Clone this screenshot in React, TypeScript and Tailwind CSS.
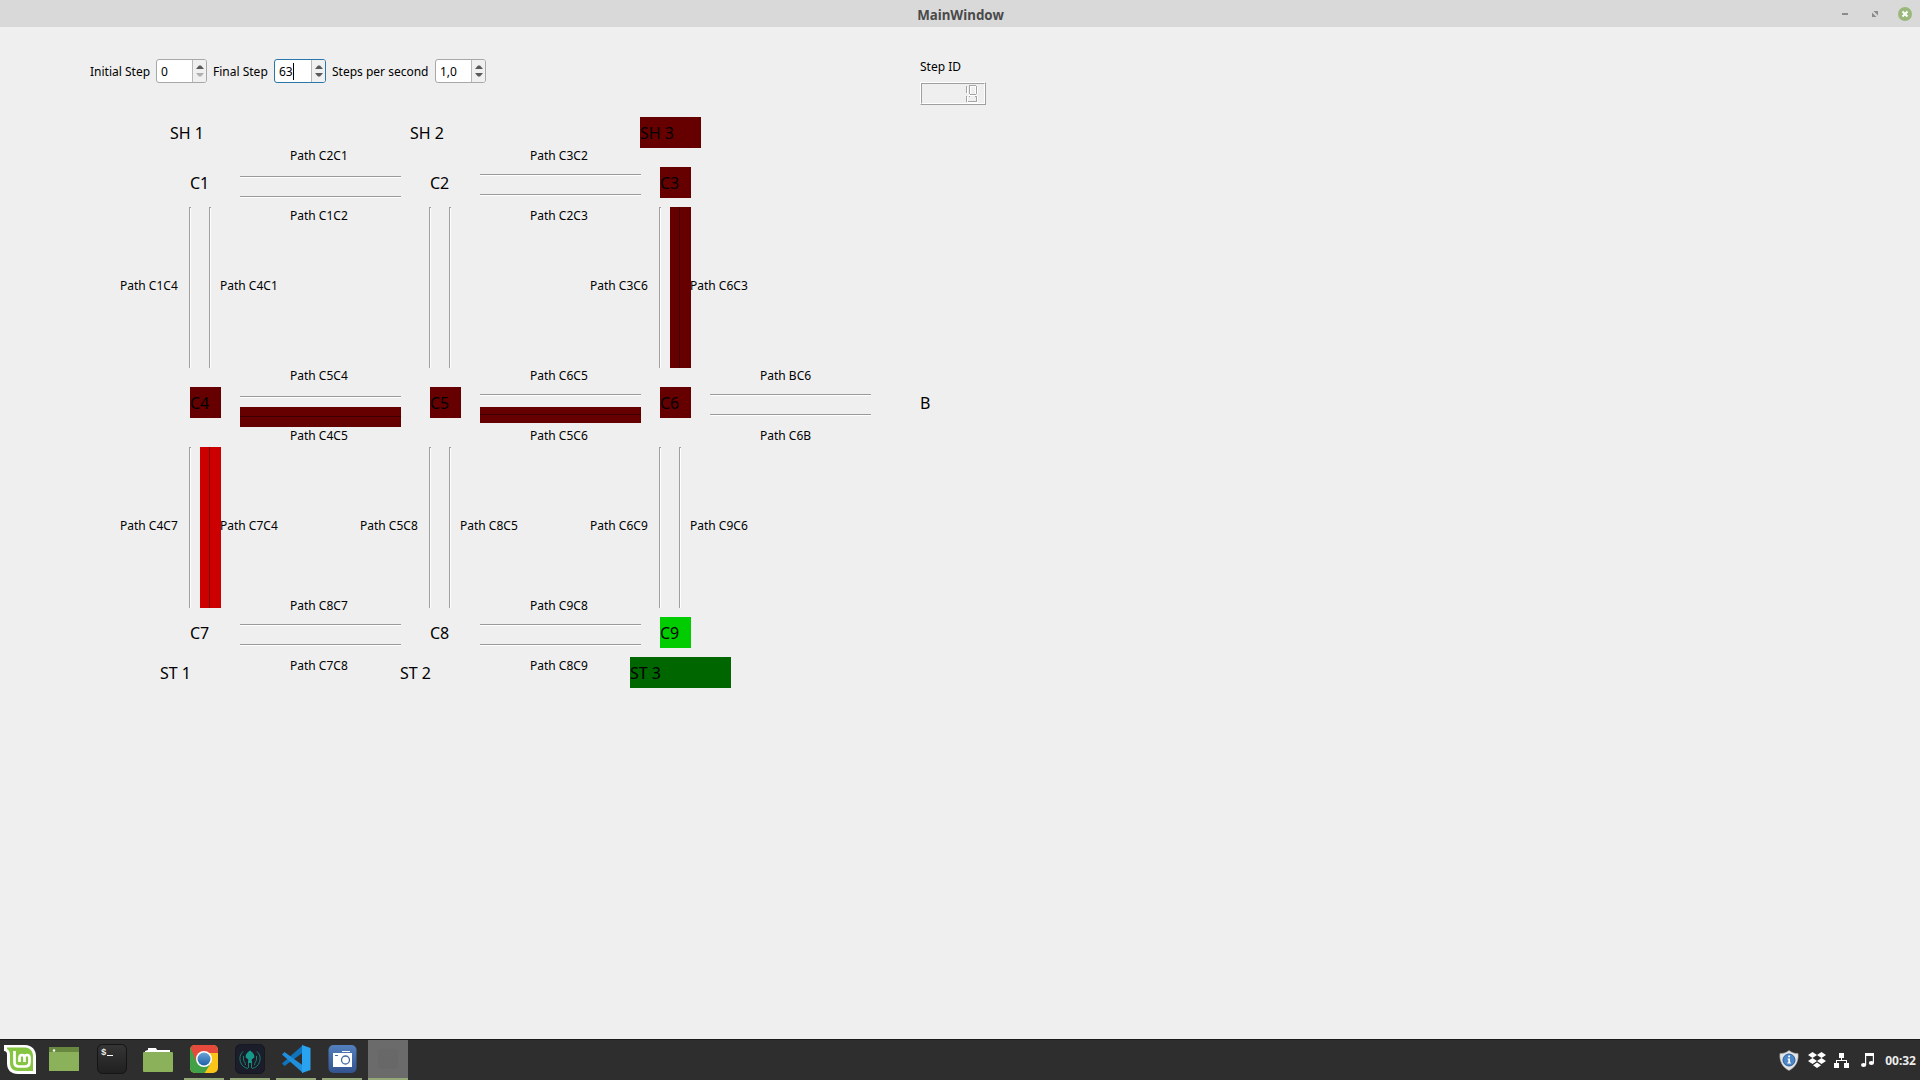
import React from 'react';

type Stop = { name: string; x: number; y: number; w?: number; fill?: string };
type Caption = { text: string; x: number; y: number };
type Lane = { x: number; y: number; vertical?: boolean };
type Load = { x: number; y: number; w: number; h: number; fill: string; line: string; at: number; vertical?: boolean };

const STOPS: Stop[] = [
  { name: 'SH 1', x: 170, y: 117 },
  { name: 'SH 2', x: 410, y: 117 },
  { name: 'SH 3', x: 640, y: 117, w: 61, fill: 'bg-[#660000]' },
  { name: 'C1', x: 190, y: 167 },
  { name: 'C2', x: 430, y: 167 },
  { name: 'C3', x: 660, y: 167, w: 31, fill: 'bg-[#660000]' },
  { name: 'C4', x: 190, y: 387, w: 31, fill: 'bg-[#660000]' },
  { name: 'C5', x: 430, y: 387, w: 31, fill: 'bg-[#660000]' },
  { name: 'C6', x: 660, y: 387, w: 31, fill: 'bg-[#660000]' },
  { name: 'B', x: 920, y: 387 },
  { name: 'C7', x: 190, y: 617 },
  { name: 'C8', x: 430, y: 617 },
  { name: 'C9', x: 660, y: 617, w: 31, fill: 'bg-[#00cc00]' },
  { name: 'ST 1', x: 160, y: 657 },
  { name: 'ST 2', x: 400, y: 657 },
  { name: 'ST 3', x: 630, y: 657, w: 101, fill: 'bg-[#006600]' },
];

const CAPTIONS: Caption[] = [
  { text: 'Path C2C1', x: 290, y: 147 },
  { text: 'Path C3C2', x: 530, y: 147 },
  { text: 'Path C1C2', x: 290, y: 207 },
  { text: 'Path C2C3', x: 530, y: 207 },
  { text: 'Path C1C4', x: 120, y: 277 },
  { text: 'Path C4C1', x: 220, y: 277 },
  { text: 'Path C3C6', x: 590, y: 277 },
  { text: 'Path C6C3', x: 690, y: 277 },
  { text: 'Path C5C4', x: 290, y: 367 },
  { text: 'Path C6C5', x: 530, y: 367 },
  { text: 'Path BC6', x: 760, y: 367 },
  { text: 'Path C4C5', x: 290, y: 427 },
  { text: 'Path C5C6', x: 530, y: 427 },
  { text: 'Path C6B', x: 760, y: 427 },
  { text: 'Path C4C7', x: 120, y: 517 },
  { text: 'Path C7C4', x: 220, y: 517 },
  { text: 'Path C5C8', x: 360, y: 517 },
  { text: 'Path C8C5', x: 460, y: 517 },
  { text: 'Path C6C9', x: 590, y: 517 },
  { text: 'Path C9C6', x: 690, y: 517 },
  { text: 'Path C8C7', x: 290, y: 597 },
  { text: 'Path C9C8', x: 530, y: 597 },
  { text: 'Path C7C8', x: 290, y: 657 },
  { text: 'Path C8C9', x: 530, y: 657 },
];

const LANES: Lane[] = [
  { x: 240, y: 176 },
  { x: 240, y: 196 },
  { x: 480, y: 174 },
  { x: 480, y: 194 },
  { x: 240, y: 396 },
  { x: 480, y: 394 },
  { x: 710, y: 394 },
  { x: 710, y: 414 },
  { x: 240, y: 624 },
  { x: 240, y: 644 },
  { x: 480, y: 624 },
  { x: 480, y: 644 },
  { x: 189, y: 207, vertical: true },
  { x: 209, y: 207, vertical: true },
  { x: 429, y: 207, vertical: true },
  { x: 449, y: 207, vertical: true },
  { x: 659, y: 207, vertical: true },
  { x: 189, y: 447, vertical: true },
  { x: 429, y: 447, vertical: true },
  { x: 449, y: 447, vertical: true },
  { x: 659, y: 447, vertical: true },
  { x: 679, y: 447, vertical: true },
];

const LOADS: Load[] = [
  { x: 240, y: 407, w: 161, h: 20, fill: 'bg-[#660000]', line: 'bg-[#3d0000]', at: 9 },
  { x: 480, y: 407, w: 161, h: 16, fill: 'bg-[#660000]', line: 'bg-[#3d0000]', at: 7 },
  { x: 670, y: 207, w: 21, h: 161, fill: 'bg-[#660000]', line: 'bg-[#3d0000]', at: 9, vertical: true },
  { x: 200, y: 447, w: 21, h: 161, fill: 'bg-[#cc0000]', line: 'bg-[#7a0000]', at: 9, vertical: true },
];

function Diagram() {
  return (
    <div className="pointer-events-none absolute inset-x-0 -top-[27px] h-[720px]">
      {CAPTIONS.map((c) => (
        <span key={c.text} className="absolute text-[12px] leading-[17px] whitespace-nowrap" style={{ left: c.x, top: c.y }}>
          {c.text}
        </span>
      ))}
      {LANES.map((l, i) =>
        l.vertical ? (
          <div key={i} className="absolute h-[161px] w-[2px] border-t border-l border-[#9f9f9f] bg-white" style={{ left: l.x, top: l.y }} />
        ) : (
          <div key={i} className="absolute h-[2px] w-[161px] border-t border-[#9a9a9a] bg-white" style={{ left: l.x, top: l.y }} />
        ),
      )}
      {LOADS.map((b, i) => (
        <div key={i} className={`absolute ${b.fill}`} style={{ left: b.x, top: b.y, width: b.w, height: b.h }}>
          {b.vertical ? (
            <div className={`absolute inset-y-0 w-px ${b.line}`} style={{ left: b.at }} />
          ) : (
            <div className={`absolute inset-x-0 h-px ${b.line}`} style={{ top: b.at }} />
          )}
        </div>
      ))}
      {STOPS.map((s) => (
        <div
          key={s.name}
          className={`absolute h-[31px] text-[16px] leading-[33px] whitespace-nowrap ${s.fill ?? ''}`}
          style={{ left: s.x, top: s.y, width: s.w }}
        >
          {s.name}
        </div>
      ))}
    </div>
  );
}

function SpinBox({ value, width, focused, atMin }: { value: string; width: string; focused?: boolean; atMin?: boolean }) {
  return (
    <div className={`flex h-6 ${width} overflow-hidden rounded-[3px] border bg-white ${focused ? 'border-[#2a76a8]' : 'border-[#a8a8a8]'}`}>
      <div className="flex flex-1 items-center pt-px pl-1 text-[12px]">
        {value}
        {focused && <span className="h-[17px] w-px bg-black" />}
      </div>
      <div className="flex w-[14px] flex-col items-center justify-between border-l border-[#b8b8b8] bg-[#f0f0f0] py-[5px]">
        <svg width="8" height="4" viewBox="0 0 8 4"><path d="M0 4L3 0.5h2L8 4z" fill="#5a5a5a" /></svg>
        <svg width="8" height="4" viewBox="0 0 8 4"><path d="M0 0L3 3.5h2L8 0z" fill={atMin ? '#b0b0b0' : '#5a5a5a'} /></svg>
      </div>
    </div>
  );
}

function Controls() {
  return (
    <div className="flex h-6 items-center text-[12px]">
      <span className="w-[66px] pt-px whitespace-nowrap">Initial Step</span>
      <SpinBox value="0" width="w-[51px]" atMin />
      <span className="ml-[6px] w-[61px] pt-px whitespace-nowrap">Final Step</span>
      <SpinBox value="63" width="w-[52px]" focused />
      <span className="ml-[6px] w-[103px] pt-px whitespace-nowrap">Steps per second</span>
      <SpinBox value="1,0" width="w-[51px]" />
    </div>
  );
}

function StepDisplay() {
  return (
    <div className="flex flex-col">
      <span className="text-[12px] leading-[17px]">Step ID</span>
      <div className="mt-[7px] h-[23px] w-[66px] border border-t-white border-r-[#9f9f9f] border-b-[#9f9f9f] border-l-white">
        <div className="flex h-full justify-end border border-t-[#9f9f9f] border-r-white border-b-white border-l-[#9f9f9f] pr-[6px]">
          <svg width="12" height="19" viewBox="0 0 12 19" fill="none" shapeRendering="crispEdges">
            <path d="M1.500 3v7M1.500 13v5M11.500 3v7M11.500 12v7M4.500 3v7M9.500 3v7M3 2.500h7M2 11.500h9M2 18.500h9" stroke="#fff" />
            <path d="M0.500 2v7M0.500 12v6M3.500 2v8M10.500 2v8M10.500 12v6M3 1.500h7M4 10.500h6M3 12.500h1M9 12.500h1M2 17.500h8" stroke="#a4a4a4" />
          </svg>
        </div>
      </div>
    </div>
  );
}

function TitleBar() {
  return (
    <header className="grid h-[27px] grid-cols-3 items-center bg-[#d9d9d9]">
      <span />
      <h1 className="pt-[2px] pl-px text-center text-[13.33px] leading-[20px] font-bold text-[#4a4a4a]">MainWindow</h1>
      <div className="flex items-center justify-end pr-2">
        <svg width="6" height="14" viewBox="0 0 6 14" className="mr-6"><path d="M0 6h6v2H0z" fill="#8b8b8b" /></svg>
        <svg width="6" height="6" viewBox="0 0 6 6" className="mr-5" fill="#8b8b8b"><path d="M1.500 0H6v4.500zM0 1.500V6h4.500z" /></svg>
        <svg width="14" height="14" viewBox="0 0 14 14">
          <circle cx="7" cy="7" r="7" fill="#9ab87c" />
          <path d="M4.500 4.500l5 5m0-5l-5 5" stroke="#fff" strokeWidth="2" />
        </svg>
      </div>
    </header>
  );
}

function MintIcon() {
  return (
    <svg width="32" height="30" viewBox="0 0 32 30">
      <path d="M0 1h21c7 0 11 5 11 11v18H14C7 30 3 26 3 19v-8C3 8 2 7 0 7z" fill="#fff" />
      <path d="M3 3.500h18c5 0 8 4 8 8.500v15H14c-5 0-8-3-8-8V11C6 8 5 6 3 5z" fill="#86c541" />
      <path d="M10.500 7v11c0 3 1.500 4.500 4.500 4.500h6c3 0 4.500-1.500 4.500-4.500v-4c0-4-5-4-5 0v4m0-4c0-4-5-4-5 0v4" fill="none" stroke="#fff" strokeWidth="2.700" />
    </svg>
  );
}

function WindowIcon() {
  return (
    <svg width="30" height="24" viewBox="0 0 30 24">
      <path d="M0 1q0-1 1-1h28q1 0 1 1v23H0z" fill="#8bb15b" />
      <path d="M0 1q0-1 1-1h28q1 0 1 1v4H0z" fill="#68883f" />
      <circle cx="5" cy="3.500" r="1.200" fill="#fff" />
    </svg>
  );
}

function TerminalIcon() {
  return (
    <svg width="30" height="30" viewBox="0 0 30 30">
      <defs>
        <linearGradient id="term" x2="0" y2="1"><stop stopColor="#353535" /><stop offset="1" stopColor="#202020" /></linearGradient>
      </defs>
      <rect x=".5" y=".5" width="29" height="29" rx="5" fill="url(#term)" stroke="#141414" />
      <text x="4" y="10.500" fill="#e8e8e8" fontSize="9" fontWeight="bold" fontFamily="Liberation Mono, monospace">$</text>
      <path d="M10 11.500h6" stroke="#fff" />
    </svg>
  );
}

function FolderIcon() {
  return (
    <svg width="30" height="25" viewBox="0 0 30 25">
      <path d="M2 6V4l3-1V1h8l1 2h13v3z" fill="#fff" />
      <path d="M0 6q0-1 1-1h28q1 0 1 1v18q0 1-1 1H1q-1 0-1-1z" fill="#8bb15b" />
    </svg>
  );
}

function ChromeIcon() {
  return (
    <svg width="30" height="30" viewBox="0 0 30 30">
      <defs>
        <clipPath id="chromeClip"><rect x="1" y="1" width="28" height="28" rx="5" /></clipPath>
        <linearGradient id="chromeBlue" x2="0" y2="1"><stop stopColor="#6aa5d8" /><stop offset="1" stopColor="#1e5fa8" /></linearGradient>
      </defs>
      <g clipPath="url(#chromeClip)">
        <path d="M0 0h30v30H0z" fill="#fac518" />
        <path d="M0 0v30h15l7-11-7-4z" fill="#42a047" />
        <path d="M0 0h30v9H15v6l-7 4z" fill="#e54a3c" />
      </g>
      <circle cx="15" cy="15" r="8" fill="#fff" />
      <circle cx="15" cy="15" r="6.500" fill="url(#chromeBlue)" />
    </svg>
  );
}

function KrakenIcon() {
  return (
    <svg width="30" height="30" viewBox="0 0 30 30" fill="none">
      <rect x=".5" y=".5" width="29" height="29" rx="5" fill="#1c1d2b" stroke="#171722" />
      <path d="M8 7.500A10 10 0 0 0 13 24.500M22 7.500A10 10 0 0 1 17 24.500M8.500 12v3c0 3 2 3 2 6M21.500 12v3c0 3-2 3-2 6M13.500 17v7M16.500 17v7" stroke="#17806f" strokeWidth="1" />
      <path d="M15 6.500c3.500 2 4.800 5 4.300 7l-2.600 2v3.500h-3.400v-3.500l-2.600-2c-.5-2 .8-5 4.300-7z" fill="#17998a" />
    </svg>
  );
}

function CodeIcon() {
  return (
    <svg width="29" height="28" viewBox="0 0 29 28">
      <path d="M21 0L0 18.500l2.500 2.500L21 7.500z" fill="#1074bc" />
      <path d="M21 28L0 9.500 2.500 7 21 20.500z" fill="#2090dc" />
      <path d="M20 0l8.500 3v22L20 28z" fill="#29a3ef" />
    </svg>
  );
}

function CameraIcon() {
  return (
    <svg width="29" height="30" viewBox="0 0 29 30">
      <defs>
        <linearGradient id="cam" x2="0" y2="1"><stop stopColor="#5380bd" /><stop offset="1" stopColor="#33538f" /></linearGradient>
      </defs>
      <rect x=".5" y="1" width="28" height="28" rx="5" fill="url(#cam)" />
      <path d="M14 7h8v1h-8zM5 9h19v14H5z" fill="#fff" />
      <path d="M7 11.500h3" stroke="#45699f" />
      <circle cx="17.500" cy="16" r="4" fill="none" stroke="#45699f" strokeWidth="1.300" />
    </svg>
  );
}

function TaskSlot({ children, running, active }: { children?: React.ReactNode; running?: boolean; active?: boolean }) {
  return (
    <div className={`flex h-10 w-10 items-center justify-center border-b-2 ${running ? 'border-[#95a978]' : 'border-transparent'} ${active ? 'bg-[#6b6b6b]' : ''}`}>
      {children}
    </div>
  );
}

function Taskbar() {
  return (
    <footer className="flex h-[41px] items-center border-t border-[#1a1a1a] bg-[#2e2e2e]">
      <TaskSlot><MintIcon /></TaskSlot>
      <div className="ml-1 flex"><TaskSlot><WindowIcon /></TaskSlot></div>
      <div className="ml-2 flex gap-[6px]">
        <TaskSlot><TerminalIcon /></TaskSlot>
        <TaskSlot><FolderIcon /></TaskSlot>
        <TaskSlot running><ChromeIcon /></TaskSlot>
        <TaskSlot running><KrakenIcon /></TaskSlot>
        <TaskSlot running><CodeIcon /></TaskSlot>
        <TaskSlot running><CameraIcon /></TaskSlot>
        <TaskSlot running active><div className="h-5 w-5 rounded-sm bg-[#686868]" /></TaskSlot>
      </div>
      <div className="ml-auto flex items-center pr-1">
        <svg width="20" height="21" viewBox="0 0 20 21">
          <path d="M10 .5c3 2.500 6 3 9 3 1 8-3 14-9 17C4 17.500 0 11.500 1 3.500c3 0 6-.5 9-3z" fill="#e4e4e4" stroke="#aaa" strokeWidth=".6" />
          <circle cx="10" cy="10" r="6" fill="#4a86c8" stroke="#2c5f9e" />
          <path d="M9.200 5.500h1.800v1.700H9.200zM8.500 8.500H11v4h1v1H8.300v-1h1v-3h-.8z" fill="#fff" />
        </svg>
        <svg width="18" height="17" viewBox="0 0 18 17" className="ml-[9px]" fill="#fff">
          <path d="M4.500 0L9 3 4.500 6 0 3zM13.500 0L18 3l-4.500 3L9 3zM4.500 6L9 9l-4.500 3L0 9zM13.500 6L18 9l-4.500 3L9 9zM9 10.500l4 2.700L9 16l-4-2.800z" />
        </svg>
        <svg width="15" height="15" viewBox="0 0 15 15" className="ml-2" fill="#fff">
          <path d="M5 0h5v5H8v2h5v3h2v5h-5v-5h2V8H3v2h2v5H0v-5h2V7h5V5H5z" />
        </svg>
        <svg width="13" height="14" viewBox="0 0 13 14" className="ml-3" fill="#fff">
          <path d="M4 0h9v10h-1.200V3H5.200v9H4z" /><ellipse cx="2.600" cy="11.900" rx="2.600" ry="2" /><ellipse cx="10.400" cy="10" rx="2.600" ry="2" />
        </svg>
        <span className="ml-[11px] pt-px text-[12px] leading-4 font-bold text-[#ececec]">00:32</span>
      </div>
    </footer>
  );
}

export default function App() {
  return (
    <div className="flex h-[1080px] w-[1920px] flex-col overflow-hidden bg-[#efefef] font-['Noto_Sans',sans-serif] text-black">
      <TitleBar />
      <main className="relative flex flex-1 items-start pt-8 pl-[90px]">
        <div className="w-[830px]"><Controls /></div>
        <div className="-mt-px"><StepDisplay /></div>
        <Diagram />
      </main>
      <Taskbar />
    </div>
  );
}
